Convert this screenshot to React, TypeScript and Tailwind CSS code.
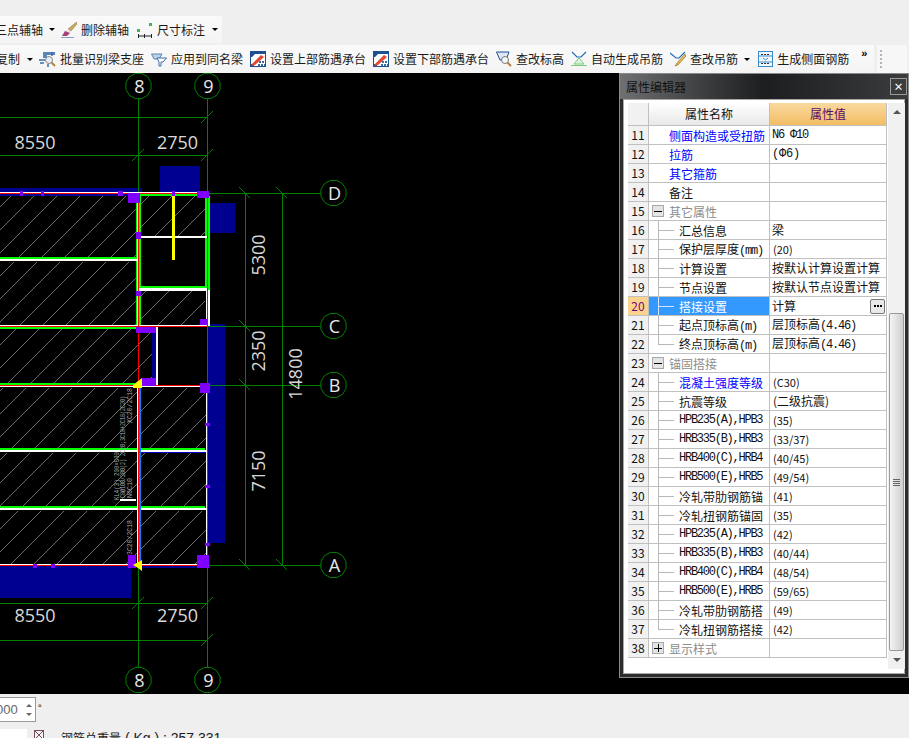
import React from "react";

const cn = '"Noto Sans CJK SC", "Liberation Sans", sans-serif';

function Caret() {
  return <span className="w-0 h-0 border-x-[3px] border-x-transparent border-t-[3px] border-t-black shrink-0" />;
}

// toolbar icons, all about 16x16
function IconBrush() {
  return (
    <svg width="16" height="16" viewBox="0 0 16 16" className="shrink-0">
      <path d="M15.5 0 L7 7 L9.5 9.5 L16 2 Z" fill="#c9a860" stroke="#8a7038" strokeWidth="0.5" />
      <path d="M7 7 L4 9 L9 11 L10 9.5 Z" fill="#e8e8f0" />
      <path d="M4 9 L1 14 L6 14 L9 11 Z" fill="#a8407a" />
      <path d="M0 15.5 H13" stroke="#8aa0c0" strokeWidth="1" />
    </svg>
  );
}
function IconDim() {
  return (
    <svg width="16" height="16" viewBox="0 0 16 16" className="shrink-0">
      <rect x="0" y="7" width="3" height="3" fill="#4caf50" />
      <rect x="12" y="1" width="3" height="3" fill="#4caf50" />
      <path d="M1.5 12 V16 M1.5 14 H14.5 M14.5 12 V16 M7.5 12 V16" stroke="#222" strokeWidth="1" fill="none" />
    </svg>
  );
}
function IconBatch() {
  return (
    <svg width="17" height="16" viewBox="0 0 17 16" className="shrink-0">
      <path d="M4 1 H16 V4 H8 V7 H4 Z" fill="#5b86b8" />
      <path d="M0 9 H6 M1 12 H5 M9 13 V16 M13 1 V5" stroke="#3a6ea5" strokeWidth="1.5" />
      <circle cx="10" cy="9" r="3.5" fill="#e8eef5" stroke="#8a8a8a" />
      <path d="M12.5 11.5 L16 15" stroke="#b08040" strokeWidth="2" />
    </svg>
  );
}
function IconApply() {
  return (
    <svg width="16" height="16" viewBox="0 0 16 16" className="shrink-0">
      <path d="M0.5 3 H11 L8 8 H3 Z" fill="#bcd0e6" stroke="#5b86b8" />
      <path d="M6 7 H15.5 L12 11 H10 V15 H8 V11 Z" fill="#fff" stroke="#3a6ea5" />
    </svg>
  );
}
function IconSet() {
  return (
    <svg width="16" height="16" viewBox="0 0 16 16" className="shrink-0">
      <rect x="0.5" y="0.5" width="15" height="15" fill="#fff" stroke="#1d4f91" />
      <path d="M0 0 H16 V3 H5 L2 6 H0 Z M0 13 H4 V16 H0 Z" fill="#1d4f91" />
      <path d="M2 13 L11 4 L14 6 L5 14 L1 15 Z" fill="#e2472f" />
      <path d="M9 11 H15 M8 14 H15" stroke="#3a6ea5" strokeWidth="2" strokeDasharray="2 1" />
    </svg>
  );
}
function IconElev() {
  return (
    <svg width="16" height="16" viewBox="0 0 16 16" className="shrink-0">
      <path d="M0.5 1 H13 L10 9 H4 Z" fill="#dfe8f2" stroke="#1d4f91" />
      <circle cx="9" cy="9" r="3.5" fill="#f5f8fb" stroke="#777" />
      <path d="M11.5 11.5 L15 15" stroke="#b08040" strokeWidth="2" />
    </svg>
  );
}
function IconAuto() {
  return (
    <svg width="16" height="16" viewBox="0 0 16 16" className="shrink-0">
      <path d="M1 1 L6 6 H10 L15 1" stroke="#1d6fb8" strokeWidth="1.2" fill="none" />
      <path d="M8 7 L3 13 H13 Z" fill="#dff4df" stroke="#7ccb7c" />
      <path d="M0 14.5 H16" stroke="#7ccb7c" />
    </svg>
  );
}
function IconFix() {
  return (
    <svg width="16" height="16" viewBox="0 0 16 16" className="shrink-0">
      <path d="M0 2 L6 7 H9 L15 1" stroke="#1d6fb8" strokeWidth="1.2" fill="none" />
      <path d="M15 3 L7 12 L5 15 L8 14 L16 5 Z" fill="#e8b84a" stroke="#8a6a20" strokeWidth="0.6" />
    </svg>
  );
}
function IconSide() {
  return (
    <svg width="15" height="16" viewBox="0 0 15 16" className="shrink-0">
      <rect x="0.5" y="0.5" width="14" height="15" fill="#f2f8fd" stroke="#3a8ac8" />
      <path d="M1 5 H14 M1 11 H14" stroke="#3a8ac8" />
      <path d="M3 3.5 H12 M3 12.5 H12" stroke="#333" strokeDasharray="2 1" />
      <path d="M5 7 L7.5 9 L10 7" stroke="#3a8ac8" fill="none" />
    </svg>
  );
}

function ToolItem({ icon, label, caret }: { icon: React.ReactNode; label: string; caret?: boolean }) {
  return (
    <div className="flex items-center gap-1 shrink-0">
      {icon}
      <span className="whitespace-nowrap">{label}</span>
      {caret && <span className="ml-[2px] flex"><Caret /></span>}
    </div>
  );
}

function Toolbars() {
  return (
    <div className="h-[73px] bg-[#efefef] text-[12px] text-[#1a1a1a] pt-4 flex flex-col gap-[2px] overflow-hidden" style={{ fontFamily: cn }}>
      <div className="h-[27px] w-[227px] bg-gradient-to-b from-[#fafafa] to-[#f4f4f4] flex items-center -ml-[5px] gap-[5px]">
        <div className="flex items-center shrink-0">
          <span className="whitespace-nowrap">三点辅轴</span>
          <span className="ml-[6px] flex"><Caret /></span>
        </div>
        <div className="ml-[1px]"><ToolItem icon={<IconBrush />} label="删除辅轴" /></div>
        <div className="ml-[3px]"><ToolItem icon={<IconDim />} label="尺寸标注" /></div>
        <span className="ml-[2px] flex"><Caret /></span>
      </div>
      <div className="h-[28px] flex">
        <div className="w-[878px] h-full bg-gradient-to-b from-[#fafafa] to-[#f4f4f4] flex items-center -ml-[4px] gap-[7px] shrink-0">
          <div className="flex items-center shrink-0">
            <span className="whitespace-nowrap">复制</span>
            <span className="ml-[7px] flex"><Caret /></span>
          </div>
          <div className="-ml-[1px]"><ToolItem icon={<IconBatch />} label="批量识别梁支座" /></div>
          <ToolItem icon={<IconApply />} label="应用到同名梁" />
          <ToolItem icon={<IconSet />} label="设置上部筋遇承台" />
          <ToolItem icon={<IconSet />} label="设置下部筋遇承台" />
          <ToolItem icon={<IconElev />} label="查改标高" />
          <ToolItem icon={<IconAuto />} label="自动生成吊筋" />
          <ToolItem icon={<IconFix />} label="查改吊筋" caret />
          <div className="ml-px"><ToolItem icon={<IconSide />} label="生成侧面钢筋" /></div>
          <span className="ml-[5px] text-[11px] font-bold leading-none -mt-3 text-black" style={{ fontFamily: '"Liberation Sans", sans-serif' }}>»</span>
        </div>
        <div className="ml-[3px] w-[30px] h-full bg-[#f7f7f7] flex flex-col gap-[2px] pt-[5px] pl-[3px]">
          <span className="w-[2px] h-[2px] bg-[#b5b5b5]" />
          <span className="w-[2px] h-[2px] bg-[#b5b5b5]" />
          <span className="w-[2px] h-[2px] bg-[#b5b5b5]" />
          <span className="w-[2px] h-[2px] bg-[#b5b5b5]" />
          <span className="w-[2px] h-[2px] bg-[#b5b5b5]" />
        </div>
      </div>
    </div>
  );
}

function AxisBubble({ x, y, t }: { x: number; y: number; t: string }) {
  const pts = Array.from({ length: 12 }, (_, i) => {
    const a = (i * Math.PI) / 6 + Math.PI / 12;
    return `${x + 13 * Math.cos(a)},${y + 13 * Math.sin(a)}`;
  }).join(" ");
  return (
    <g>
      <polygon points={pts} fill="#000" stroke="#008000" />
      <text x={x + 1} y={y + 6.5} textAnchor="middle" fontSize="18" fill="#e8e8e8" fontFamily='"Open Sans", sans-serif'>{t}</text>
    </g>
  );
}

function Tick({ x, y }: { x: number; y: number }) {
  return <path d={`M${x - 6} ${y + 6} L${x + 6} ${y - 6}`} stroke="#008000" />;
}

function Tick2({ x, y }: { x: number; y: number }) {
  return <path d={`M${x - 6} ${y - 6} L${x + 5} ${y + 5}`} stroke="#008000" />;
}

function DimV({ x, y, t }: { x: number; y: number; t: string }) {
  return (
    <text transform={`translate(${x} ${y}) rotate(-90)`} textAnchor="middle" fontSize="18" fill="#d8d8d8" fontFamily='"Open Sans", sans-serif'>{t}</text>
  );
}

function DimH({ x, y, t }: { x: number; y: number; t: string }) {
  return (
    <text x={x} y={y} textAnchor="middle" fontSize="18" fill="#d8d8d8" fontFamily='"Open Sans", sans-serif'>{t}</text>
  );
}

function SmallV({ x, y, t, len }: { x: number; y: number; t: string; len: number }) {
  return (
    <text transform={`translate(${x} ${y}) rotate(-90)`} fontSize="7.5" fill="#a8a8a8" textLength={len} lengthAdjust="spacingAndGlyphs" fontFamily='"Liberation Mono", monospace'>{t}</text>
  );
}

function Drawing() {
  const purple = "#7f00ff";
  const blue = "#000090";
  const green = "#00ff00";
  return (
    <svg viewBox="0 73 909 621" className="absolute inset-0 w-full h-full">
      <defs>
        <pattern id="hatch" width="23" height="23" patternUnits="userSpaceOnUse">
          <path d="M-2 25 L25 -2 M-2 2 L2 -2 M21 25 L25 21" stroke="#b4b4b4" strokeWidth="0.6" />
        </pattern>
      </defs>

      {/* blue blocks */}
      <rect x="160" y="166" width="40" height="27" fill={blue} />
      <rect x="208" y="203" width="27" height="30" fill={blue} />
      <rect x="207" y="324" width="18" height="219" fill={blue} />
      <rect x="0" y="566" width="131" height="32" fill={blue} />
      <rect x="0" y="188" width="142" height="8" fill={blue} />
      <rect x="152" y="333" width="4" height="47" fill={blue} />
      <rect x="140" y="564" width="65" height="4" fill={blue} />

      {/* hatched slabs */}
      <rect x="0" y="196" width="136" height="61" fill="url(#hatch)" />
      <rect x="0" y="262" width="136" height="63" fill="url(#hatch)" />
      <rect x="0" y="329" width="152" height="54" fill="url(#hatch)" />
      <rect x="0" y="388" width="137" height="60" fill="url(#hatch)" />
      <rect x="0" y="453" width="137" height="53" fill="url(#hatch)" />
      <rect x="0" y="511" width="137" height="53" fill="url(#hatch)" />
      <rect x="141" y="196" width="64" height="40" fill="url(#hatch)" />
      <rect x="141" y="291" width="64" height="34" fill="url(#hatch)" />
      <rect x="141" y="388" width="65" height="60" fill="url(#hatch)" />
      <rect x="141" y="453" width="65" height="53" fill="url(#hatch)" />
      <rect x="141" y="511" width="65" height="53" fill="url(#hatch)" />

      {/* axis and dimension lines */}
      <g stroke="#008000" fill="none">
        <path d="M138.5 73 V668 M207.5 73 V668" />
        <path d="M0 193.5 H321 M0 326.5 H321 M0 385.5 H321 M0 565.5 H321" />
        <path d="M245.5 193 V565 M282.5 193 V565" />
        <path d="M0 117.5 H207 M0 155.5 H207 M0 603.5 H207 M0 640.5 H207" />
      </g>
      <Tick x={138} y={155} /><Tick x={207} y={155} /><Tick x={207} y={117} />
      <Tick x={138} y={603} /><Tick x={207} y={603} /><Tick x={207} y={640} />
      <Tick2 x={245} y={193} /><Tick2 x={282} y={193} /><Tick2 x={245} y={326} /><Tick2 x={245} y={385} />
      <Tick2 x={245} y={565} /><Tick2 x={282} y={565} />

      {/* beams */}
      <rect x="136" y="203" width="1" height="123" fill={green} />
      <rect x="139" y="196" width="2" height="130" fill={green} />
      <rect x="205" y="196" width="2" height="94" fill={green} />
      <rect x="208" y="196" width="2" height="94" fill={green} />
      <rect x="140" y="194" width="65" height="2" fill={green} />
      <rect x="0" y="257" width="137" height="2" fill={green} />
      <rect x="0" y="259" width="137" height="2" fill="#fff" />
      <rect x="139" y="286" width="68" height="2" fill={green} />
      <rect x="139" y="288" width="68" height="3" fill="#fff" />
      <rect x="206" y="290" width="4" height="36" fill="#fff" />
      <rect x="139" y="236" width="68" height="2" fill="#fff" />
      <rect x="172" y="196" width="3" height="64" fill="#ffff00" />
      <rect x="0" y="327" width="137" height="2" fill={green} />
      <rect x="0" y="383" width="135" height="2" fill={green} />
      <rect x="0" y="448" width="205" height="2" fill={green} />
      <rect x="0" y="450" width="207" height="2" fill="#fff" />
      <rect x="141" y="452" width="65" height="1" fill="#0000c0" />
      <rect x="0" y="506" width="205" height="3" fill={green} />
      <rect x="0" y="508" width="207" height="2" fill="#fff" />
      <rect x="156" y="327" width="2" height="58" fill="#fff" />
      <rect x="137" y="194" width="1" height="132" fill="#fff" />
      <rect x="137" y="386" width="1" height="179" fill="#fff" />
      <rect x="206" y="386" width="1" height="179" fill="#fff" />
      <rect x="139" y="386" width="2" height="179" fill="#0080ff" />
      <rect x="120" y="499" width="16" height="2" fill="#fff" />

      {/* red and white outlines */}
      <path d="M0 192.5 H207 M0 325.5 H207 M0 386.5 H207 M0 564.5 H207" stroke="#fff" />
      <path d="M0 193.5 H207 M0 326.5 H207 M0 385.5 H207 M0 565.5 H207" stroke="#ff0000" />
      <path d="M138.5 193 V565 M207.5 193 V565" stroke="#ff0000" />

      {/* column corners */}
      <rect x="128" y="193" width="12" height="10" fill={purple} />
      <rect x="197" y="191" width="12" height="7" fill={purple} />
      <rect x="136" y="327" width="20" height="6" fill={purple} />
      <rect x="142" y="378" width="14" height="8" fill={purple} />
      <rect x="200" y="319" width="7" height="6" fill={purple} />
      <rect x="200" y="383" width="10" height="10" fill={purple} />
      <rect x="128" y="555" width="8" height="13" fill={purple} />
      <rect x="197" y="555" width="12" height="13" fill={purple} />
      <rect x="136" y="232" width="5" height="7" fill={purple} />
      <rect x="136" y="291" width="5" height="5" fill={purple} />
      <rect x="172" y="191" width="3" height="5" fill={purple} />
      <rect x="20" y="191" width="3" height="5" fill={purple} />
      <rect x="41" y="191" width="3" height="5" fill={purple} />
      <rect x="118" y="191" width="5" height="5" fill={purple} />
      <rect x="33" y="564" width="4" height="4" fill={purple} />
      <rect x="51" y="564" width="4" height="4" fill={purple} />
      <rect x="205" y="423" width="5" height="3" fill={purple} />
      <rect x="205" y="485" width="5" height="3" fill={purple} />
      <rect x="205" y="543" width="5" height="3" fill={purple} />

      {/* arrow marks */}
      <path d="M133 385 L142 378 V388 H133 Z" fill="#ffff00" />
      <path d="M133 565 L142 560 V571 L138 568 Z" fill="#ffff00" />

      {/* beam labels */}
      <SmallV x={119} y={500} t="KL4(3) 200×500" len={48} />
      <SmallV x={125} y={498} t="C8@100/200(2) 2C20;3C18+2C18(2C20)" len={102} />
      <SmallV x={132} y={498} t="N6C10" len={20} />
      <SmallV x={132} y={423} t="XC20/2C18" len={35} />
      <SmallV x={132} y={555} t="3C20/2C18" len={35} />

      {/* dimension text */}
      <DimH x={35} y={149} t="8550" />
      <DimH x={177.5} y={149} t="2750" />
      <DimH x={35} y={622} t="8550" />
      <DimH x={177.5} y={622} t="2750" />
      <DimV x={265} y={255} t="5300" />
      <DimV x={265} y={351} t="2350" />
      <DimV x={265} y={471} t="7150" />
      <DimV x={302} y={374} t="14800" />

      <AxisBubble x={138.5} y={86} t="8" />
      <AxisBubble x={207.5} y={86} t="9" />
      <AxisBubble x={138.5} y={680} t="8" />
      <AxisBubble x={207.5} y={680} t="9" />
      <AxisBubble x={333.5} y={193} t="D" />
      <AxisBubble x={333.5} y={326} t="C" />
      <AxisBubble x={333.5} y={385} t="B" />
      <AxisBubble x={333.5} y={565} t="A" />
    </svg>
  );
}

type Row = {
  n: number;
  name: string;
  value?: string;
  tone?: "blue" | "grey";
  // 0 no tree, 1 group head, 2 tree child, 3 last child
  kind?: 0 | 1 | 2 | 3;
  open?: boolean;
  small?: boolean;
};

const rows: Row[] = [
  { n: 11, name: "侧面构造或受扭筋", value: "N6 Φ10", tone: "blue" },
  { n: 12, name: "拉筋", value: "(Φ6)", tone: "blue" },
  { n: 13, name: "其它箍筋", tone: "blue" },
  { n: 14, name: "备注" },
  { n: 15, name: "其它属性", tone: "grey", kind: 1, open: true },
  { n: 16, name: "汇总信息", value: "梁", kind: 2 },
  { n: 17, name: "保护层厚度(mm)", value: "(20)", kind: 2 },
  { n: 18, name: "计算设置", value: "按默认计算设置计算", kind: 2 },
  { n: 19, name: "节点设置", value: "按默认节点设置计算", kind: 2 },
  { n: 20, name: "搭接设置", value: "计算", kind: 2 },
  { n: 21, name: "起点顶标高(m)", value: "层顶标高(4.46)", kind: 2 },
  { n: 22, name: "终点顶标高(m)", value: "层顶标高(4.46)", kind: 3 },
  { n: 23, name: "锚固搭接", tone: "grey", kind: 1, open: true },
  { n: 24, name: "混凝土强度等级", value: "(C30)", tone: "blue", kind: 2 },
  { n: 25, name: "抗震等级", value: "(二级抗震)", kind: 2 },
  { n: 26, name: "HPB235(A),HPB3", value: "(35)", kind: 2, small: true },
  { n: 27, name: "HRB335(B),HRB3", value: "(33/37)", kind: 2, small: true },
  { n: 28, name: "HRB400(C),HRB4", value: "(40/45)", kind: 2, small: true },
  { n: 29, name: "HRB500(E),HRB5", value: "(49/54)", kind: 2, small: true },
  { n: 30, name: "冷轧带肋钢筋锚", value: "(41)", kind: 2 },
  { n: 31, name: "冷轧扭钢筋锚固", value: "(35)", kind: 2 },
  { n: 32, name: "HPB235(A),HPB3", value: "(42)", kind: 2, small: true },
  { n: 33, name: "HRB335(B),HRB3", value: "(40/44)", kind: 2, small: true },
  { n: 34, name: "HRB400(C),HRB4", value: "(48/54)", kind: 2, small: true },
  { n: 35, name: "HRB500(E),HRB5", value: "(59/65)", kind: 2, small: true },
  { n: 36, name: "冷轧带肋钢筋搭", value: "(49)", kind: 2 },
  { n: 37, name: "冷轧扭钢筋搭接", value: "(42)", kind: 3 },
  { n: 38, name: "显示样式", tone: "grey", kind: 1 },
];

const mono = '"Liberation Mono", monospace';

// Chinese text followed by a narrow "(...)" part, as the bitmap font of the original draws it
function Mixed({ text }: { text: string }) {
  const i = text.indexOf("(");
  if (i <= 0) return <>{text}</>;
  return (
    <>
      {text.slice(0, i)}
      <span className="text-[12px] tracking-[-1.2px]" style={{ fontFamily: mono }}>{text.slice(i)}</span>
    </>
  );
}

function ValueText({ value }: { value?: string }) {
  if (!value) return <span />;
  if (value === "N6 Φ10") return <span className="text-[12px] tracking-[-1.2px]" style={{ fontFamily: mono }}>{value}</span>;
  if (value === "(Φ6)") return <span className="text-[12px] tracking-[-0.2px]" style={{ fontFamily: mono }}>{value}</span>;
  if (value === "(二级抗震)") return <span className="text-[12px] ml-px">{value}</span>;
  if (value.startsWith("(")) return <span className="text-[11px] ml-px">{value}</span>;
  return <span className="text-[12px]"><Mixed text={value} /></span>;
}

function TreeBox({ open }: { open?: boolean }) {
  return (
    <span className="relative w-[12px] h-[12px] bg-[#e4e4e4] border border-[#a8a8a8] shrink-0 flex items-center justify-center">
      <span className="absolute w-[8px] h-[1px] bg-black" />
      {!open && <span className="absolute w-[1px] h-[8px] bg-black" />}
    </span>
  );
}

function PropRow({ r }: { r: Row }) {
  const selected = r.n === 20;
  const color = selected ? "text-white" : r.tone === "blue" ? "text-[#0000ff]" : r.tone === "grey" ? "text-[#8c8c8c]" : "text-[#111]";
  const kind = r.kind ?? 0;
  return (
    <div className="flex h-[19px] border-b border-[#c0c0c0]">
      <div className={`w-[21px] shrink-0 border-r border-[#c0c0c0] flex items-center justify-center text-[12px] ${selected ? "bg-[#fbd38d] text-[#7a0a7a]" : "bg-[#f1f1f1] text-[#111]"}`}>
        {r.n}
      </div>
      <div className={`w-[121px] shrink-0 border-r border-[#c0c0c0] flex items-center overflow-hidden whitespace-nowrap relative ${selected ? "bg-[#3399ff]" : ""}`}>
        {kind === 0 && <span className={`pl-[20px] pt-px ${color}`}>{r.name}</span>}
        {kind === 1 && (
          <>
            <span className="ml-[3px] flex"><TreeBox open={r.open} /></span>
            <span className={`ml-[5px] pt-px ${color}`}>{r.name}</span>
          </>
        )}
        {kind >= 2 && (
          <>
            <span className={`absolute left-[9px] top-0 w-[1px] ${kind === 3 ? "h-[10px]" : "h-full"} ${selected ? "bg-[#cfe6ff]" : "bg-[#b8b8b8]"}`} />
            <span className={`ml-[9px] w-[16px] h-[1px] shrink-0 ${selected ? "bg-[#cfe6ff]" : "bg-[#b8b8b8]"}`} />
            {r.small ? (
              <span className={`ml-[5px] text-[12px] tracking-[-1.25px] ${color}`} style={{ fontFamily: mono }}>{r.name}</span>
            ) : (
              <span className={`ml-[5px] pt-px ${color}`}><Mixed text={r.name} /></span>
            )}
          </>
        )}
      </div>
      <div className="w-[117px] shrink-0 border-r border-[#c0c0c0] flex items-center justify-between pl-[2px] whitespace-nowrap overflow-hidden text-[#111]">
        <ValueText value={r.value} />
        {selected && (
          <span className="w-[15px] h-[15px] mr-[1px] border border-[#777] rounded-[2px] bg-[#e8e8e8] flex items-center justify-center gap-[1px]">
            <span className="w-[2px] h-[2px] bg-black" />
            <span className="w-[2px] h-[2px] bg-black" />
            <span className="w-[2px] h-[2px] bg-black" />
          </span>
        )}
      </div>
    </div>
  );
}

function PropertyPanel() {
  return (
    <div className="absolute left-[619px] top-0 w-[290px] h-[605px] border border-[#8a8a8a] bg-[#2a2c2e] flex flex-col text-[12px]" style={{ fontFamily: cn }}>
      {/* title bar */}
      <div className="h-[25px] shrink-0 flex items-center justify-between pl-[6px] pr-[1px] bg-gradient-to-r from-[#6f7072] via-[#1c1e20] to-[#3a3c3e]">
        <span className="text-[#111]">属性编辑器</span>
        <span className="w-[17px] h-[17px] border border-[#9a9a9a] bg-[#3c3c3c] flex items-center justify-center text-white text-[10px] font-bold leading-none">×</span>
      </div>
      {/* grid */}
      <div className="flex-1 mx-[3px] mb-[3px] border border-[#a8a8a8] bg-white flex pl-[2px] pt-[3px] pb-[4px]">
        <div className="w-[261px] shrink-0 pl-[2px]">
          <div className="flex h-[23px] border-b border-[#c0c0c0]">
            <div className="w-[21px] shrink-0 border-r border-[#c0c0c0] bg-[#f1f1f1]" />
            <div className="w-[121px] shrink-0 border-r border-[#c0c0c0] bg-gradient-to-b from-white to-[#e8e8e8] flex items-center justify-center text-[#111]">属性名称</div>
            <div className="w-[117px] shrink-0 border-r border-[#c0c0c0] bg-gradient-to-b from-[#f9d99e] to-[#f2bd63] flex items-center justify-center text-[#5a0a6a]">属性值</div>
          </div>
          {rows.map((r) => (
            <PropRow key={r.n} r={r} />
          ))}
        </div>
        {/* scrollbar */}
        <div className="w-[17px] shrink-0 ml-[1px] bg-[#f0f0f0] flex flex-col items-center justify-between pt-[7px] pb-[7px] relative">
          <span className="w-0 h-0 border-x-[4px] border-x-transparent border-b-[4px] border-b-[#555]" />
          <span className="absolute left-[1px] top-[210px] w-[15px] h-[338px] rounded-[2px] border border-[#9a9a9a] bg-gradient-to-r from-[#f4f4f4] to-[#cfcfcf] flex flex-col items-center justify-center gap-[1px]">
            <span className="w-[7px] h-[1px] bg-[#666]" />
            <span className="w-[7px] h-[1px] bg-[#666]" />
            <span className="w-[7px] h-[1px] bg-[#666]" />
            <span className="w-[7px] h-[1px] bg-[#666]" />
          </span>
          <span className="w-0 h-0 border-x-[4px] border-x-transparent border-t-[4px] border-t-[#555]" />
        </div>
      </div>
    </div>
  );
}

function StatusArea() {
  return (
    <div className="h-[44px] bg-[#efefef] overflow-hidden text-[12px] text-[#1a1a1a]" style={{ fontFamily: cn }}>
      <div className="flex items-center mt-[3px] h-[25px]">
        <div className="w-[37px] h-[25px] -ml-px border border-[#9a9a9a] bg-white flex items-center justify-between pr-[3px]">
          <span className="text-[#666] text-[13px] -ml-[4px]" style={{ fontFamily: '"Liberation Sans", sans-serif' }}>000</span>
          <span className="flex flex-col gap-[6px]">
            <span className="w-0 h-0 border-x-[3px] border-x-transparent border-b-[3px] border-b-[#666]" />
            <span className="w-0 h-0 border-x-[3px] border-x-transparent border-t-[3px] border-t-[#666]" />
          </span>
        </div>
        <span className="ml-[2px] text-[10px] -mt-1">°</span>
      </div>
      <div className="flex items-start mt-[7px] h-[20px]">
        <div className="w-[27px] h-[20px] bg-white" />
        <svg width="10" height="10" viewBox="0 0 10 10" className="ml-[7px] mt-[1px] shrink-0">
          <rect x="0.5" y="0.5" width="9" height="9" fill="#f4f4f4" stroke="#7a4a5a" />
          <path d="M1 1 L9 9 M9 1 L1 9" stroke="#7a4a5a" />
        </svg>
        <span className="ml-[17px] whitespace-nowrap leading-[18px]">
          钢筋总重量
          <span className="text-[14px]" style={{ fontFamily: '"Liberation Sans", sans-serif' }}> ( Kg ) : 257.331</span>
        </span>
      </div>
    </div>
  );
}

export default function App() {
  return (
    <div className="w-[909px] h-[738px] overflow-hidden flex flex-col bg-[#efefef]">
      <Toolbars />
      <div className="relative h-[621px] bg-black shrink-0 overflow-hidden">
        <Drawing />
        <PropertyPanel />
      </div>
      <StatusArea />
    </div>
  );
}
